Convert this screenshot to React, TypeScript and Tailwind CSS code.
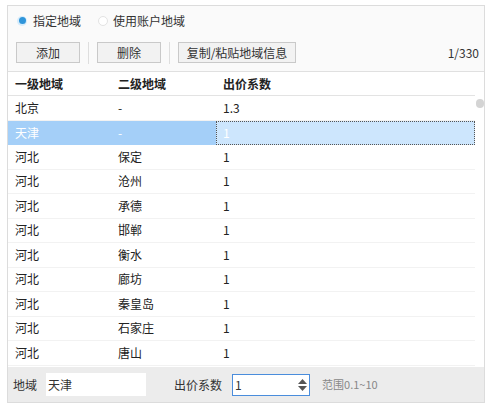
import { useState } from 'react'

interface Row {
  a: string
  b: string
  c: string
}

const rows: Row[] = [
  { a: '北京', b: '-', c: '1.3' },
  { a: '天津', b: '-', c: '1' },
  { a: '河北', b: '保定', c: '1' },
  { a: '河北', b: '沧州', c: '1' },
  { a: '河北', b: '承德', c: '1' },
  { a: '河北', b: '邯郸', c: '1' },
  { a: '河北', b: '衡水', c: '1' },
  { a: '河北', b: '廊坊', c: '1' },
  { a: '河北', b: '秦皇岛', c: '1' },
  { a: '河北', b: '石家庄', c: '1' },
  { a: '河北', b: '唐山', c: '1' },
]

const font = "font-['Microsoft_YaHei','Noto_Sans_CJK_SC',sans-serif]"

function ToolButton({ label, w }: { label: string; w: string }) {
  return (
    <button
      type="button"
      className={`${w} h-[21px] border border-[#c9c9c9] bg-[#f2f2f2] text-[12px] text-[#333] leading-none flex items-center justify-center`}
    >
      {label}
    </button>
  )
}

export default function App() {
  const [mode, setMode] = useState<'fixed' | 'account'>('fixed')
  const selected = 1

  return (
    <div className={`w-[493px] h-[412px] bg-white pt-[5px] pl-[7px] ${font}`}>
      <div className="w-[478px] h-[398px] border border-[#dcdcdc] bg-[#fafafa] flex flex-col">
        {/* Radio row */}
        <div className="h-[28px] flex items-center pl-[9px] pt-[1px] text-[12px] text-[#333]">
          <button type="button" onClick={() => setMode('fixed')} className="flex items-center gap-[6px]">
            <span className="w-[10px] h-[10px] rounded-full bg-[#d6ecfb] flex items-center justify-center">
              <span className="w-[7px] h-[7px] rounded-full bg-[#2f95da]" />
            </span>
            <span>指定地域</span>
          </button>
          <button type="button" onClick={() => setMode('account')} className="ml-[17px] flex items-center gap-[5px]">
            <span className="w-[10px] h-[10px] rounded-full border border-[#e3e3e3] bg-white" />
            <span className={mode === 'account' ? 'text-[#333]' : 'text-[#333]'}>使用账户地域</span>
          </button>
        </div>

        {/* Toolbar */}
        <div className="h-[38px] flex items-center pl-[8px] pr-[5px] border-b border-[#e0e0e0]">
          <ToolButton label="添加" w="w-[64px]" />
          <span className="mx-[8px] w-px h-[22px] bg-[#dedede]" />
          <ToolButton label="删除" w="w-[64px]" />
          <span className="mx-[8px] w-px h-[22px] bg-[#dedede]" />
          <ToolButton label="复制/粘贴地域信息" w="w-[118px]" />
          <span className="ml-auto text-[12px] text-[#333]">1/330</span>
        </div>

        {/* Table */}
        <div className="flex-1 bg-white flex">
          <div className="w-[467px] text-[12px] text-[#222]">
            <div className="h-[24px] flex items-center font-bold border-b border-[#e3e3e3]">
              <span className="w-[103px] pl-[7px]">一级地域</span>
              <span className="w-[105px] pl-[7px]">二级地域</span>
              <span className="flex-1 pl-[7px]">出价系数</span>
            </div>
            {rows.map((r, i) =>
              i === selected ? (
                <div key={i} className="h-[24.5px] flex text-white">
                  <div className="w-[208px] flex items-center bg-[#a4cff8]">
                    <span className="w-[103px] pl-[7px]">{r.a}</span>
                    <span className="w-[105px] pl-[7px]">{r.b}</span>
                  </div>
                  <div className="flex-1 flex items-center pl-[6px] bg-[#cde6fd] border border-dotted border-[#555]">
                    {r.c}
                  </div>
                </div>
              ) : (
                <div key={i} className="h-[24.5px] flex items-center border-b border-[#f2f2f2]">
                  <span className="w-[103px] pl-[7px]">{r.a}</span>
                  <span className="w-[105px] pl-[7px]">{r.b}</span>
                  <span className="flex-1 pl-[7px]">{r.c}</span>
                </div>
              )
            )}
          </div>
          <div className="flex-1 flex justify-center pt-[27px]">
            <span className="w-[8px] h-[9px] rounded-full bg-[#d4d4d4]" />
          </div>
        </div>

        {/* Bottom bar */}
        <div className="h-[35px] bg-[#ececec] flex items-center pl-[5px] text-[12px] text-[#333]">
          <span>地域</span>
          <div className="ml-[9px] w-[100px] h-[23px] bg-white flex items-center pl-[2px]">天津</div>
          <span className="ml-[28px]">出价系数</span>
          <div className="ml-[10px] w-[78px] h-[22px] bg-white border border-[#4a8ddc] flex items-center">
            <span className="flex-1 pl-[2px]">1</span>
            <span className="w-[12px] mr-[1px] flex flex-col items-center gap-[2px]">
              <svg width="9" height="5" viewBox="0 0 9 5">
                <path d="M0 5 L4.5 0 L9 5 Z" fill="#555" />
              </svg>
              <svg width="9" height="5" viewBox="0 0 9 5">
                <path d="M0 0 L9 0 L4.5 5 Z" fill="#555" />
              </svg>
            </span>
          </div>
          <span className="ml-[12px] text-[11px] text-[#888]">范围0.1~10</span>
        </div>
      </div>
    </div>
  )
}
